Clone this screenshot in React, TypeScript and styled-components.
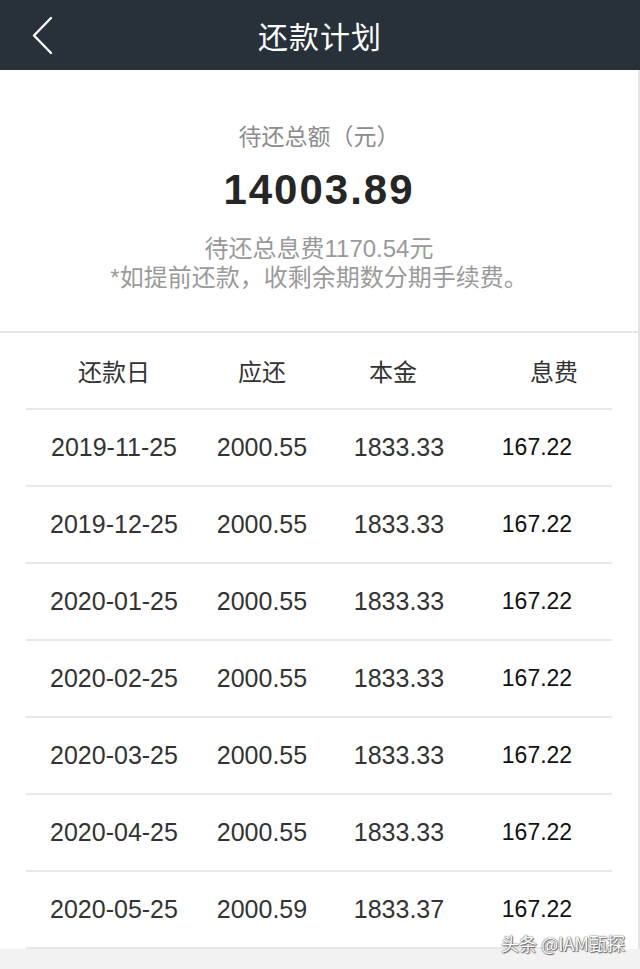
import styled, { createGlobalStyle } from "styled-components";

const GlobalStyle = createGlobalStyle`
  html, body {
    margin: 0;
    padding: 0;
    background: #f2f2f2;
    font-family: "Liberation Sans", "Noto Sans CJK SC", sans-serif;
  }
`;

const Page = styled.div`
  position: relative;
  width: 640px;
  height: 969px;
  overflow: hidden;
  background: #f2f2f2;
`;

const NavBar = styled.header`
  position: relative;
  height: 70px;
  background: #27313a;
  display: flex;
  align-items: center;
  justify-content: center;
`;

const BackButton = styled.button`
  position: absolute;
  left: 26px;
  top: 12px;
  width: 34px;
  height: 46px;
  padding: 0;
  border: none;
  background: transparent;
  display: flex;
  align-items: center;
  justify-content: center;
`;

const Title = styled.h1`
  margin: 0;
  color: #ffffff;
  font-size: 30px;
  font-weight: 400;
  letter-spacing: 1px;
  font-family: "Noto Sans CJK SC", sans-serif;
`;

const Content = styled.main`
  background: #ffffff;
  border-right: 2px solid #e4e4e4;
`;

const Summary = styled.section`
  display: flex;
  flex-direction: column;
  align-items: center;
  padding: 50px 0 39px;
  border-bottom: 2px solid #e6e6e6;
`;

const Label = styled.div`
  font-size: 23px;
  line-height: 30px;
  color: #8c8c8c;
  font-family: "Noto Sans CJK SC", sans-serif;
`;

const Amount = styled.div`
  margin-top: 15px;
  font-size: 42px;
  line-height: 50px;
  font-weight: 700;
  letter-spacing: 2px;
  color: #262626;
`;

const Note = styled.div<{ $first?: boolean }>`
  margin-top: ${(p) => (p.$first ? "19px" : "0")};
  font-size: 24px;
  line-height: 29px;
  color: #9a9a9a;
`;

const Table = styled.section`
  padding: 0 26px;
`;

const Row = styled.div<{ $head?: boolean }>`
  display: grid;
  grid-template-columns: ${(p) =>
    p.$head ? "176px 120px 142px 180px" : "176px 120px 154px 122px"};
  align-items: center;
  height: 75px;
  border-bottom: 2px solid #e8e8e8;
`;

const Cell = styled.div<{ $head?: boolean; $dark?: boolean }>`
  text-align: center;
  white-space: nowrap;
  font-size: ${(p) => (p.$head ? "24px" : p.$dark ? "23px" : "25px")};
  font-family: ${(p) =>
    p.$head
      ? `"Noto Sans CJK SC", sans-serif`
      : `"Liberation Sans", "Noto Sans CJK SC", sans-serif`};
  color: ${(p) => (p.$dark ? "#111111" : "#333333")};
`;

const Watermark = styled.div`
  position: absolute;
  right: 15px;
  bottom: 13px;
  font-size: 18px;
  color: #ffffff;
  font-family: "Noto Sans CJK SC", sans-serif;
  text-shadow: 0 0 1px #555, 0 0 2px #777, 1px 1px 1px #666;
`;

const rows = [
  ["2019-11-25", "2000.55", "1833.33", "167.22"],
  ["2019-12-25", "2000.55", "1833.33", "167.22"],
  ["2020-01-25", "2000.55", "1833.33", "167.22"],
  ["2020-02-25", "2000.55", "1833.33", "167.22"],
  ["2020-03-25", "2000.55", "1833.33", "167.22"],
  ["2020-04-25", "2000.55", "1833.33", "167.22"],
  ["2020-05-25", "2000.59", "1833.37", "167.22"],
];

const App = () => {
  return (
    <Page>
      <GlobalStyle />
      <NavBar>
        <BackButton aria-label="返回">
          <svg width="24" height="40" viewBox="0 0 24 40">
            <polyline
              points="20,3 3,20.5 20,38"
              fill="none"
              stroke="#ffffff"
              strokeWidth="2.4"
              strokeLinecap="round"
              strokeLinejoin="round"
            />
          </svg>
        </BackButton>
        <Title>还款计划</Title>
      </NavBar>
      <Content>
        <Summary>
          <Label>待还总额（元）</Label>
          <Amount>14003.89</Amount>
          <Note $first>待还总息费1170.54元</Note>
          <Note>*如提前还款，收剩余期数分期手续费。</Note>
        </Summary>
        <Table>
          <Row $head>
            <Cell $head>还款日</Cell>
            <Cell $head>应还</Cell>
            <Cell $head>本金</Cell>
            <Cell $head>息费</Cell>
          </Row>
          {rows.map((r) => (
            <Row key={r[0]}>
              <Cell>{r[0]}</Cell>
              <Cell>{r[1]}</Cell>
              <Cell>{r[2]}</Cell>
              <Cell $dark>{r[3]}</Cell>
            </Row>
          ))}
        </Table>
      </Content>
      <Watermark>头条 @IAM甄探</Watermark>
    </Page>
  );
};

export default App;
